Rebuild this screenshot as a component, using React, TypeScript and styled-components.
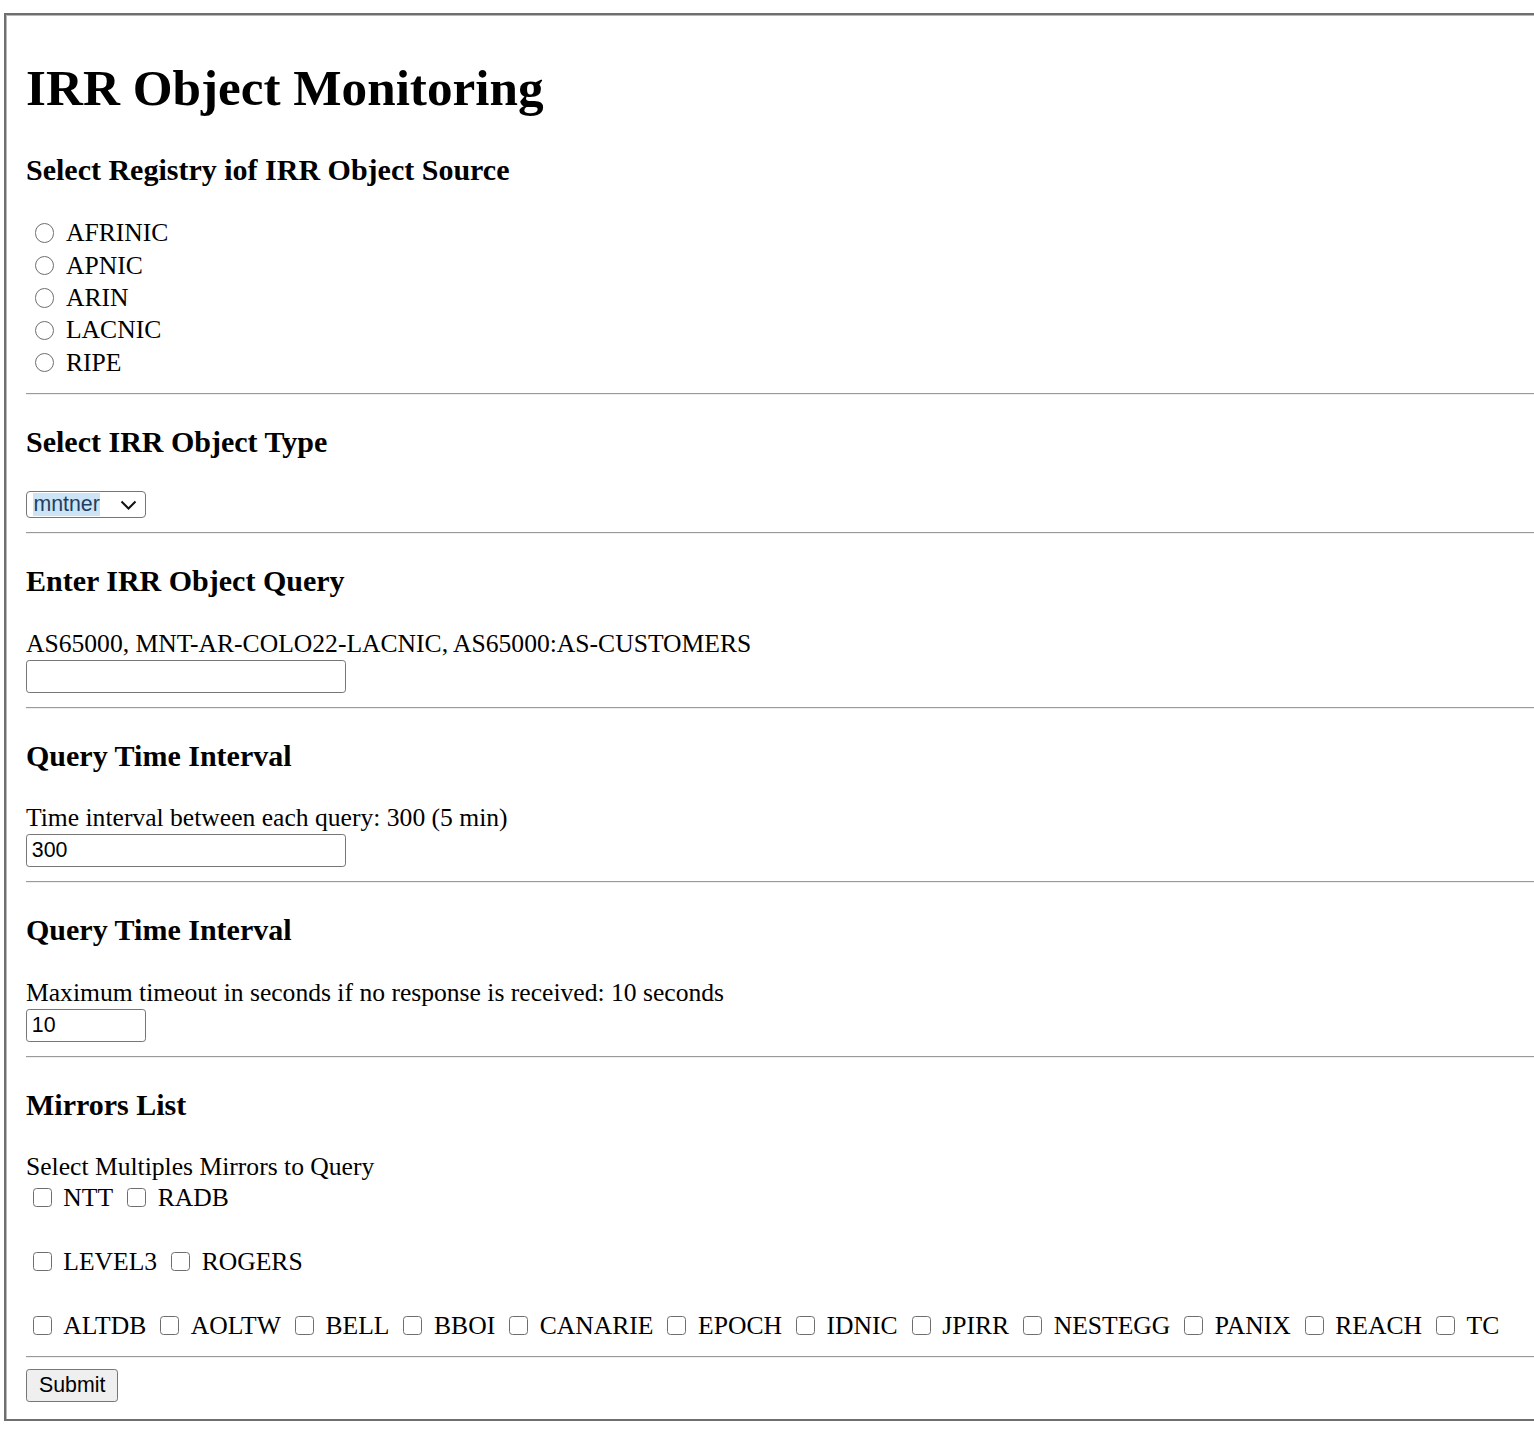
import React from 'react'
import styled, { createGlobalStyle } from 'styled-components'

const Global = createGlobalStyle`
  html, body {
    margin: 0;
    padding: 0;
    overflow: hidden;
    background: #fff;
  }
  body {
    font-family: "Liberation Serif", "Times New Roman", serif;
    color: #000;
  }
`

const Panel = styled.form`
  box-sizing: border-box;
  width: 1580px;
  margin: 13px 0 0 4px;
  padding: 10.2px 20px 17px;
  border: 2px solid #6f6f6f;
  box-shadow: inset 1px 1px 0 #b8b8b8;
`

const Title = styled.h1`
  font-size: 51.2px;
  line-height: 58.8px;
  font-weight: bold;
  margin: 34.3px 0;
`

const SectionTitle = styled.h3`
  font-size: 30px;
  line-height: 34.4px;
  font-weight: bold;
  margin: 30px 0;
`

const Rule = styled.hr<{ $bottom?: number }>`
  height: 0;
  margin: 14px 0 ${p => p.$bottom ?? 12.8}px;
  border: none;
  border-top: 1.6px solid #9a9a9a;
  border-bottom: 1.6px solid #eeeeee;
`

const RadioRow = styled.label`
  display: flex;
  align-items: center;
  height: 32.4px;
  font-size: 25.6px;
`

const Radio = styled.input.attrs({ type: 'radio' })`
  appearance: none;
  box-sizing: border-box;
  flex: none;
  width: 19.5px;
  height: 19.5px;
  margin: 0 11.8px 0 8.7px;
  border: 1.6px solid #6e6e6e;
  border-radius: 50%;
  background: #fff;
`

const SelectBox = styled.div`
  box-sizing: border-box;
  width: 120px;
  height: 27px;
  margin-top: 32px;
  display: flex;
  align-items: center;
  justify-content: space-between;
  padding: 0 8px 0 6.4px;
  border: 1.6px solid #767676;
  border-radius: 4px;
  font: 21.33px "Liberation Sans", Arial, sans-serif;
`

const SelectedText = styled.span`
  background: #cde4f7;
  color: #1f3f5f;
  line-height: 23px;
`

const Hint = styled.div`
  font-size: 25.6px;
  line-height: 29.4px;
`

const TextInput = styled.input<{ $w: number }>`
  display: block;
  box-sizing: border-box;
  width: ${p => p.$w}px;
  height: 33px;
  margin: 1.7px 0 0;
  padding: 0 4.8px;
  border: 1.6px solid #767676;
  border-radius: 3.2px;
  font: 21.33px "Liberation Sans", Arial, sans-serif;
  color: #000;
  background: #fff;
`

const CheckRow = styled.div`
  display: flex;
  align-items: center;
  height: 32px;
  font-size: 25.6px;
  white-space: nowrap;

  & + & {
    margin-top: 32px;
  }
`

const CheckItem = styled.label`
  display: flex;
  align-items: center;
  margin-right: 7.3px;
`

const Check = styled.input.attrs({ type: 'checkbox' })`
  appearance: none;
  box-sizing: border-box;
  flex: none;
  width: 19px;
  height: 19px;
  margin: 0 11.7px 0 6.6px;
  border: 1.6px solid #6e6e6e;
  border-radius: 3.5px;
  background: #fff;
`

const SubmitButton = styled.button`
  display: block;
  box-sizing: border-box;
  height: 33.5px;
  margin-top: 11px;
  padding: 0 12px;
  border: 1.6px solid #767676;
  border-radius: 3.2px;
  background: #efefef;
  color: #000;
  font: 21.33px "Liberation Sans", Arial, sans-serif;
`

const registries = ['AFRINIC', 'APNIC', 'ARIN', 'LACNIC', 'RIPE']

const mirrorRows = [
  ['NTT', 'RADB'],
  ['LEVEL3', 'ROGERS'],
  ['ALTDB', 'AOLTW', 'BELL', 'BBOI', 'CANARIE', 'EPOCH', 'IDNIC', 'JPIRR', 'NESTEGG', 'PANIX', 'REACH', 'TC'],
]

function Chevron() {
  return (
    <svg width="17" height="10" viewBox="0 0 17 10" aria-hidden="true">
      <path d="M1.5 1.5 L8.5 8.5 L15.5 1.5" fill="none" stroke="#111" strokeWidth="2" />
    </svg>
  )
}

export default function App() {
  return (
    <>
      <Global />
      <Panel onSubmit={e => e.preventDefault()}>
        <Title>IRR Object Monitoring</Title>

        <SectionTitle>Select Registry iof IRR Object Source</SectionTitle>
        <div>
          {registries.map(r => (
            <RadioRow key={r}>
              <Radio name="registry" value={r} />
              {r}
            </RadioRow>
          ))}
        </div>
        <Rule />

        <SectionTitle>Select IRR Object Type</SectionTitle>
        <SelectBox role="combobox" aria-expanded="false">
          <SelectedText>mntner</SelectedText>
          <Chevron />
        </SelectBox>
        <Rule />

        <SectionTitle>Enter IRR Object Query</SectionTitle>
        <Hint>AS65000, MNT-AR-COLO22-LACNIC, AS65000:AS-CUSTOMERS</Hint>
        <TextInput type="text" $w={320} />
        <Rule />

        <SectionTitle>Query Time Interval</SectionTitle>
        <Hint>Time interval between each query: 300 (5 min)</Hint>
        <TextInput type="text" $w={320} defaultValue="300" />
        <Rule />

        <SectionTitle>Query Time Interval</SectionTitle>
        <Hint>Maximum timeout in seconds if no response is received: 10 seconds</Hint>
        <TextInput type="text" $w={120} defaultValue="10" />
        <Rule />

        <SectionTitle>Mirrors List</SectionTitle>
        <Hint>Select Multiples Mirrors to Query</Hint>
        {mirrorRows.map((row, i) => (
          <CheckRow key={i}>
            {row.map(m => (
              <CheckItem key={m}>
                <Check value={m} />
                {m}
              </CheckItem>
            ))}
          </CheckRow>
        ))}
        <Rule $bottom={11} />

        <SubmitButton type="submit">Submit</SubmitButton>
      </Panel>
    </>
  )
}
